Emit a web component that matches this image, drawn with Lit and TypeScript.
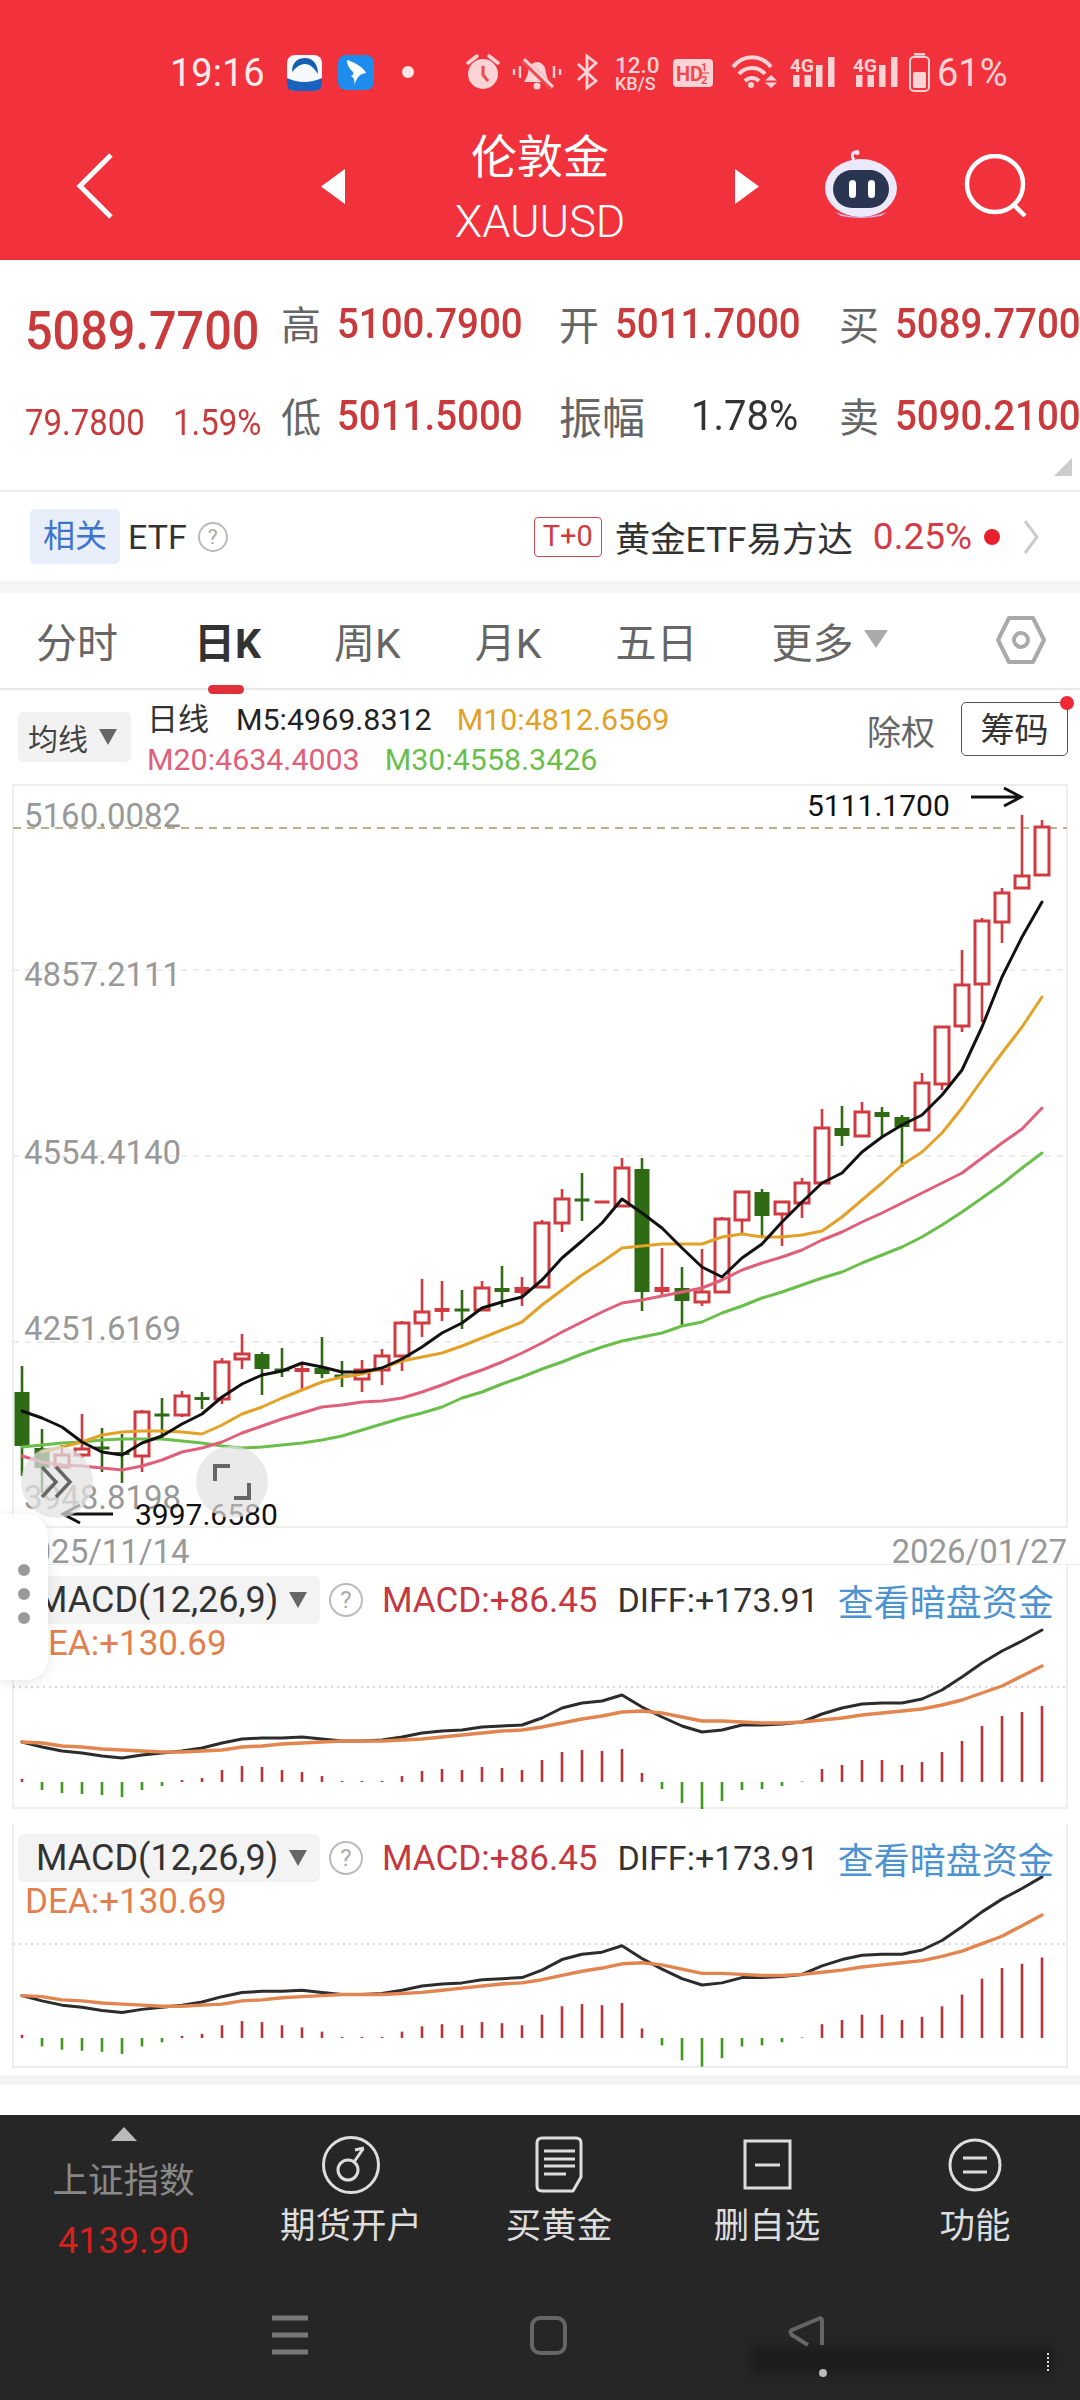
import { LitElement, html, svg, css } from 'lit';
import { customElement } from 'lit/decorators.js';

// candle: kind (r hollow red, R solid red, g solid green), body top, body bottom, wick top, wick bottom
type Candle = [string, number, number, number, number];

const CANDLES: Candle[] = [
  ['g', 1392, 1446, 1366, 1476], ['g', 1448, 1468, 1429, 1493], ['r', 1455, 1467, 1445, 1468], ['r', 1449, 1455, 1414, 1458],
  ['g', 1448, 1448, 1428, 1472], ['g', 1452, 1455, 1434, 1483], ['r', 1412, 1456, 1410, 1472], ['g', 1415, 1415, 1398, 1438],
  ['r', 1396, 1415, 1391, 1417], ['g', 1397, 1400, 1392, 1409], ['r', 1362, 1399, 1358, 1404], ['r', 1354, 1359, 1334, 1369],
  ['g', 1354, 1369, 1352, 1395], ['g', 1370, 1370, 1348, 1377], ['R', 1368, 1372, 1363, 1389], ['g', 1368, 1374, 1337, 1378],
  ['g', 1376, 1376, 1361, 1387], ['r', 1370, 1379, 1360, 1392], ['r', 1356, 1370, 1349, 1385], ['r', 1323, 1356, 1321, 1371],
  ['r', 1312, 1323, 1279, 1337], ['R', 1308, 1312, 1281, 1321], ['g', 1310, 1310, 1290, 1329], ['r', 1288, 1310, 1281, 1311],
  ['g', 1288, 1292, 1266, 1307], ['R', 1287, 1293, 1277, 1306], ['r', 1223, 1287, 1220, 1288], ['r', 1199, 1223, 1189, 1232],
  ['g', 1200, 1200, 1173, 1221], ['R', 1202, 1202, 1202, 1202], ['r', 1168, 1206, 1158, 1206], ['g', 1169, 1292, 1158, 1311],
  ['R', 1287, 1292, 1248, 1297], ['g', 1288, 1301, 1267, 1327], ['r', 1292, 1302, 1249, 1306], ['r', 1219, 1292, 1217, 1292],
  ['r', 1192, 1220, 1192, 1233], ['g', 1192, 1216, 1189, 1237], ['r', 1202, 1214, 1202, 1246], ['r', 1183, 1203, 1178, 1218],
  ['r', 1128, 1183, 1109, 1183], ['g', 1128, 1136, 1106, 1146], ['r', 1112, 1136, 1102, 1136], ['g', 1112, 1117, 1107, 1137],
  ['g', 1117, 1127, 1115, 1167], ['r', 1083, 1130, 1073, 1130], ['r', 1027, 1084, 1027, 1090], ['r', 985, 1026, 950, 1032],
  ['r', 921, 984, 918, 1022], ['r', 893, 922, 888, 943], ['r', 876, 888, 815, 888], ['r', 827, 875, 820, 875],
];

const M5 = [1411, 1418, 1427, 1442, 1452, 1455, 1443, 1436, 1424, 1414, 1397, 1384, 1375, 1371, 1363, 1367, 1372, 1372, 1368, 1359, 1347, 1333, 1323, 1308, 1302, 1297, 1280, 1258, 1241, 1223, 1199, 1213, 1228, 1248, 1267, 1277, 1258, 1244, 1222, 1202, 1183, 1173, 1152, 1137, 1125, 1115, 1095, 1070, 1027, 977, 937, 902];
const M10 = [0, 1452, 1447, 1442, 1435, 1432, 1431, 1431, 1432, 1434, 1425, 1414, 1407, 1398, 1390, 1382, 1377, 1374, 1368, 1361, 1357, 1353, 1346, 1338, 1330, 1322, 1305, 1290, 1275, 1262, 1248, 1246, 1244, 1244, 1244, 1237, 1234, 1237, 1237, 1235, 1231, 1217, 1200, 1183, 1165, 1152, 1133, 1108, 1080, 1053, 1027, 997];
const M20 = [1456, 1462, 1465, 1466, 1468, 1470, 1466, 1460, 1452, 1448, 1442, 1433, 1426, 1419, 1413, 1407, 1405, 1402, 1401, 1398, 1392, 1385, 1377, 1370, 1362, 1353, 1343, 1332, 1322, 1312, 1303, 1300, 1296, 1292, 1288, 1280, 1270, 1263, 1257, 1250, 1240, 1232, 1222, 1213, 1203, 1193, 1183, 1173, 1158, 1143, 1129, 1108];
const M30 = [1447, 1445, 1443, 1442, 1440, 1439, 1439, 1439, 1441, 1443, 1446, 1448, 1447, 1445, 1443, 1440, 1436, 1430, 1424, 1418, 1413, 1407, 1398, 1392, 1384, 1377, 1369, 1362, 1354, 1347, 1341, 1337, 1333, 1326, 1322, 1313, 1306, 1298, 1292, 1285, 1278, 1272, 1263, 1255, 1247, 1237, 1225, 1212, 1198, 1184, 1168, 1153];

// macd bars in px above (+) or below (-) the zero line of the first panel
const BARS = [3, -8, -11, -12, -13, -15, -8, -4, 2, 4, 12, 16, 15, 12, 10, 6, 1, 1, 1, 6, 11, 13, 12, 15, 14, 12, 22, 30, 32, 31, 33, 9, -7, -21, -27, -19, -8, -7, -4, 0.5, 13, 17, 22, 22, 17, 20, 30, 41, 56, 66, 70, 76];
const DIFF = [1742, 1747, 1751, 1753, 1756, 1758, 1755, 1753, 1751, 1748, 1743, 1739, 1738, 1738, 1737, 1739, 1741, 1741, 1740, 1737, 1733, 1731, 1730, 1727, 1726, 1725, 1718, 1708, 1703, 1701, 1695, 1707, 1717, 1726, 1732, 1730, 1725, 1725, 1724, 1722, 1714, 1708, 1704, 1703, 1703, 1699, 1690, 1677, 1663, 1651, 1641, 1630];
const DEA = [1742, 1743, 1746, 1747, 1749, 1750, 1751, 1752, 1752, 1751, 1750, 1747, 1746, 1744, 1743, 1742, 1741, 1741, 1741, 1740, 1739, 1737, 1735, 1733, 1731, 1730, 1727, 1723, 1719, 1716, 1712, 1711, 1713, 1717, 1721, 1721, 1722, 1723, 1723, 1722, 1720, 1718, 1715, 1713, 1711, 1709, 1705, 1700, 1693, 1686, 1676, 1666];

const xAt = (i: number) => 22 + i * 20;

const polyline = (ys: number[], color: string, width: number, map = (y: number) => y) => {
  const pts = ys.map((y, i) => (y ? `${xAt(i)},${map(y)}` : '')).join(' ');
  return svg`<polyline points=${pts} fill="none" stroke=${color} stroke-width=${width} stroke-linejoin="round" stroke-linecap="round" />`;
};

const candle = (c: Candle, i: number) => {
  const [kind, top, bottom, wickTop, wickBottom] = c;
  const x = xAt(i);
  const color = kind === 'g' ? '#2f6a14' : '#cf3b40';
  const wick = wickTop < wickBottom
    ? svg`<line x1=${x} x2=${x} y1=${wickTop} y2=${wickBottom} stroke=${color} stroke-width="2.6" />`
    : '';
  if (top === bottom) {
    return svg`${wick}<rect x=${x - 7.5} y=${top - 1.5} width="15" height="3" fill=${color} />`;
  }
  if (kind === 'r') {
    return svg`${wick}<rect x=${x - 7} y=${top} width="14" height=${bottom - top} fill="#fff" stroke=${color} stroke-width="3" />`;
  }
  return svg`${wick}<rect x=${x - 7.5} y=${top} width="15" height=${bottom - top} fill=${color} />`;
};

@customElement('macd-panel')
export class MacdPanel extends LitElement {
  static properties = {
    top: { type: Number },
    height: { type: Number },
    zero: { type: Number },
    scale: { type: Number },
    grid: { type: Number },
    frameBottom: { type: Number },
  };

  top = 0;
  height = 0;
  zero = 0;
  scale = 1;
  grid = 0;
  frameBottom = 0;

  static styles = css`
    :host {
      display: block;
      position: relative;
      box-sizing: border-box;
      padding-top: 11px;
      font-family: Roboto, "Noto Sans CJK SC", sans-serif;
    }
    .plot {
      position: absolute;
      left: 0;
      top: 0;
    }
    .head {
      position: relative;
      display: flex;
      align-items: center;
      height: 48px;
      padding-left: 18px;
      font-size: 35px;
      white-space: nowrap;
    }
    .select {
      display: flex;
      align-items: center;
      box-sizing: border-box;
      width: 302px;
      height: 48px;
      padding-left: 18px;
      background: #f3f3f3;
      border-radius: 6px;
      color: #333;
      font-size: 36px;
    }
    .select i {
      margin-left: 11px;
      border-left: 9px solid transparent;
      border-right: 9px solid transparent;
      border-top: 16px solid #666;
    }
    .help {
      margin-left: 9px;
      width: 34px;
      height: 34px;
      box-sizing: border-box;
      border: 2px solid #bbb;
      border-radius: 50%;
      color: #aaa;
      font-size: 24px;
      line-height: 30px;
      text-align: center;
    }
    .macd { margin-left: 19px; color: #c4383f; }
    .diff { margin-left: 20px; color: #333; font-size: 34px; }
    .more { margin-left: 19px; color: #4c93d0; font-size: 36px; }
    .dea {
      position: relative;
      padding: 0 0 0 25px;
      height: 40px;
      line-height: 40px;
      font-size: 35px;
      color: #e28050;
    }
  `;

  render() {
    const k = this.scale;
    const map = (y: number) => this.zero + (y - 1782) * k;
    return html`
      <svg class="plot" width="1080" height=${this.height} viewBox="0 ${this.top} 1080 ${this.height}">
        <path d="M13 ${this.top + 1} V${this.frameBottom} H1067 V${this.top + 1}" fill="none" stroke="#eee" stroke-width="2" />
        <line x1="13" x2="1067" y1=${this.grid} y2=${this.grid} stroke="#ccc" stroke-width="1.5" stroke-dasharray="2 4" />
        ${BARS.map((v, i) => svg`<line x1=${xAt(i)} x2=${xAt(i)} y1=${this.zero} y2=${this.zero - v * k}
          stroke=${v > 0 ? '#b9333a' : '#3d9a1e'} stroke-width="2.6" />`)}
        ${polyline(DIFF, '#2c2c2c', 3, map)}
        ${polyline(DEA, '#e2854f', 3.4, map)}
      </svg>
      <div class="head">
        <div class="select">MACD(12,26,9)<i></i></div>
        <div class="help">?</div>
        <div class="macd">MACD:+86.45</div>
        <div class="diff">DIFF:+173.91</div>
        <div class="more">查看暗盘资金</div>
      </div>
      <div class="dea">DEA:+130.69</div>
    `;
  }
}

@customElement('app-root')
export class AppRoot extends LitElement {
  static styles = css`
    :host {
      display: block;
      position: relative;
      width: 1080px;
      height: 2400px;
      overflow: hidden;
      background: #fff;
      font-family: Roboto, "Noto Sans CJK SC", sans-serif;
      color: #333;
    }
    svg { display: block; flex: none; }

    .header {
      height: 260px;
      background: #f1323c;
      color: #fff;
    }
    .status {
      display: flex;
      align-items: center;
      box-sizing: border-box;
      height: 128px;
      padding: 18px 0 0 170px;
    }
    .time { width: 110px; font-size: 38px; font-weight: 400; color: #fdeaea; }
    .pct { margin-left: -3px; font-size: 38px; font-weight: 400; color: #fdd3d5; }
    .nav {
      display: flex;
      align-items: center;
      height: 116px;
      padding-left: 75px;
    }
    .title {
      align-self: flex-start;
      width: 320px;
      height: 132px;
      margin: 0 35px;
      text-align: center;
    }
    .title b { display: block; font-size: 46px; font-weight: 400; line-height: 58px; }
    .title span { display: block; font-size: 45px; line-height: 72px; font-weight: 300; }

    .quote {
      position: relative;
      display: grid;
      grid-template-columns: 282px 278px 280px 240px;
      grid-auto-rows: 92px;
      box-sizing: border-box;
      height: 232px;
      padding-top: 17px;
      border-bottom: 2px solid #eee;
      white-space: nowrap;
    }
    .cell { display: flex; align-items: center; }
    .lab { flex: none; width: 56px; font-size: 40px; color: #666; margin-left: -1px; }
    .lab.wide { width: 132px; font-size: 43px; }
    /* the numerals on this screen are narrower than Roboto */
    .val {
      display: inline-block;
      font-size: 43px;
      color: #c93a3c;
      font-weight: 500;
      transform: scaleX(0.895);
      transform-origin: left center;
    }
    .val.plain { color: #333; font-weight: 400; transform: scaleX(0.93); }
    .first { padding-left: 25px; }
    .big {
      display: inline-block;
      margin-top: 14px;
      font-size: 54px;
      font-weight: 500;
      color: #c93a3c;
      transform: scaleX(0.9);
      transform-origin: left center;
    }
    .chg {
      display: inline-block;
      width: 134px;
      margin-top: 14px;
      font-size: 37px;
      color: #c93a3c;
      transform: scaleX(0.89);
      transform-origin: left center;
    }
    .chg.p { width: auto; margin-left: 14px; }
    .corner {
      position: absolute;
      right: 8px;
      bottom: 14px;
      width: 18px;
      height: 18px;
      background: #ccc;
      clip-path: polygon(100% 0, 100% 100%, 0 100%);
    }

    .etf {
      display: flex;
      align-items: center;
      height: 89px;
      padding-left: 30px;
      white-space: nowrap;
    }
    .tag {
      width: 90px;
      height: 55px;
      background: #e8effa;
      border-radius: 5px;
      color: #3f74cd;
      font-size: 32px;
      line-height: 55px;
      text-align: center;
    }
    .etf-name { margin-left: 8px; font-size: 34px; }
    .qmark {
      margin-left: 11px;
      width: 30px;
      height: 30px;
      box-sizing: border-box;
      border: 2px solid #bbb;
      border-radius: 50%;
      color: #aaa;
      font-size: 21px;
      line-height: 26px;
      text-align: center;
    }
    .t0 {
      margin-left: 306px;
      width: 68px;
      height: 40px;
      box-sizing: border-box;
      border: 1.5px solid #cf4a50;
      border-radius: 4px;
      color: #cf3b40;
      font-size: 29px;
      line-height: 36px;
      text-align: center;
    }
    .fund { margin-left: 13px; font-size: 35.4px; color: #333; }
    .fund-pct { margin-left: 20px; font-size: 37px; color: #d43b45; }
    .dot { margin-left: 12px; width: 16px; height: 16px; border-radius: 50%; background: #e8202e; }

    .gap { height: 12px; background: #f5f5f5; }
    .gap.low { height: 10px; }

    .tabs {
      display: flex;
      align-items: center;
      gap: 74px;
      box-sizing: border-box;
      height: 97px;
      padding: 0 0 2px 36px;
      border-bottom: 2px solid #e8e8e8;
      font-size: 41px;
      color: #666;
      position: relative;
    }
    .tab { position: relative; }
    .tab.on { margin: 0 -1px 0 2px; color: #333; font-weight: 700; }
    .tab.on::after {
      content: '';
      position: absolute;
      left: 14px;
      bottom: -24px;
      width: 36px;
      height: 9px;
      background: #e0313a;
      border-radius: 5px;
    }
    .more-tab { display: flex; align-items: center; gap: 10px; }
    .more-tab i {
      border-left: 12px solid transparent;
      border-right: 12px solid transparent;
      border-top: 18px solid #aaa;
      margin-top: -1px;
    }
    .hex { position: absolute; left: 995px; top: 22px; }

    .legend {
      display: flex;
      align-items: flex-start;
      height: 94px;
      padding-left: 18px;
      white-space: nowrap;
    }
    .ma-select {
      display: flex;
      align-items: center;
      box-sizing: border-box;
      width: 113px;
      height: 50px;
      margin-top: 22px;
      padding-left: 10px;
      background: #f2f2f2;
      border-radius: 5px;
      font-size: 30px;
      color: #444;
    }
    .ma-select i {
      margin-left: 11px;
      border-left: 9px solid transparent;
      border-right: 9px solid transparent;
      border-top: 16px solid #666;
    }
    .ma { margin: 10px 0 0 16px; font-size: 30.4px; line-height: 40px; }
    .ma-row { display: flex; gap: 25px; }
    .ma-day { font-size: 31px; margin-right: 2px; }
    .m5 { color: #222; }
    .m10 { color: #e3a127; }
    .m20 { color: #e0607a; }
    .m30 { color: #6abf4b; }
    .fq { margin: 20px 0 0 auto; font-size: 34px; line-height: 46px; color: #666; }
    .cm {
      position: relative;
      box-sizing: border-box;
      width: 107px;
      height: 54px;
      margin: 12px 12px 0 26px;
      border: 1.5px solid #555;
      border-radius: 5px;
      font-size: 34px;
      line-height: 54px;
      text-align: center;
      color: #333;
    }
    .cm::after {
      content: '';
      position: absolute;
      right: -7px;
      top: -7px;
      width: 14px;
      height: 14px;
      border-radius: 50%;
      background: #ee2a36;
    }

    .chart {
      position: relative;
      box-sizing: border-box;
      height: 781px;
      border-bottom: 1px solid #eee;
    }
    .chart text { font-family: Roboto, sans-serif; }
    .dates {
      display: flex;
      justify-content: space-between;
      box-sizing: border-box;
      height: 36px;
      padding: 0 13px 0 14px;
      font-size: 33px;
      line-height: 48px;
      color: #999;
    }
    .panel-a { height: 258px; }
    .panel-b { height: 252px; }
    .fab {
      position: absolute;
      top: 662px;
      width: 72px;
      height: 72px;
      border-radius: 50%;
      background: rgba(226, 226, 226, 0.72);
      display: flex;
      align-items: center;
      justify-content: center;
    }
    .fab.a { left: 21px; }
    .fab.b { left: 196px; }
    .drawer {
      position: absolute;
      left: 0;
      top: 1514px;
      width: 48px;
      height: 166px;
      background: #fff;
      border-radius: 0 22px 22px 0;
      box-shadow: 0 2px 14px rgba(0, 0, 0, 0.1);
      display: flex;
      flex-direction: column;
      align-items: center;
      gap: 12px;
      padding-top: 50px;
      box-sizing: border-box;
    }
    .drawer i { width: 12px; height: 12px; border-radius: 50%; background: #999; }

    .foot-white { height: 30px; }

    .bottom {
      position: relative;
      height: 285px;
      background: #262626;
    }
    .dock {
      display: grid;
      grid-template-columns: 247px repeat(4, 208px);
      height: 170px;
    }
    .index { text-align: center; padding-top: 12px; }
    .index i {
      display: block;
      width: 0;
      margin: 0 auto;
      border-left: 13px solid transparent;
      border-right: 13px solid transparent;
      border-bottom: 14px solid #bbb;
    }
    .index span { display: block; margin-top: 15px; font-size: 35.5px; line-height: 50px; color: #888; }
    .index b { display: block; margin-top: 10px; font-size: 36px; line-height: 50px; font-weight: 400; color: #d8201f; }
    .dock-item {
      display: flex;
      flex-direction: column;
      align-items: center;
      padding-top: 20px;
      color: #ddd;
      font-size: 35.5px;
    }
    .dock-item span { margin-top: 6px; line-height: 50px; }
    .smudge {
      position: absolute;
      left: 752px;
      top: 232px;
      width: 300px;
      height: 26px;
      background: #1b1b1b;
      filter: blur(5px);
    }
    .sys { position: absolute; left: 0; top: 190px; }
  `;

  renderStatus() {
    const pale = '#fdd3d5';
    const red = '#ee4a50';
    const signal = (x: number) => svg`
      <text x=${x} y="72" font-size="19" font-weight="700" fill=${pale} font-family="Roboto, sans-serif">4G</text>
      <rect x=${x + 3} y="75" width="6.5" height="12" fill=${pale} />
      <rect x=${x + 14.5} y="75" width="6.5" height="12" fill=${pale} />
      <rect x=${x + 26} y="65" width="6.5" height="22" fill=${pale} />
      <rect x=${x + 38} y="57" width="6.5" height="30" fill=${pale} />`;
    return html`
      <svg width="660" height="60" viewBox="280 44 660 60" style="margin-top:2px">
        <rect x="287" y="55" width="35" height="36" rx="8" fill="#f7f9fc" />
        <path d="M292 72 C292 62 298 58 305 58 C313 58 318 64 318 74 C314 68 310 64 305 64 C299 64 296 68 292 72Z" fill="#155fb3" />
        <path d="M287 78 Q304 86 322 78 V84 Q322 91 314 91 H295 Q287 91 287 84Z" fill="#1a62c0" />
        <rect x="338" y="55" width="36" height="35" rx="8" fill="#1e8cec" />
        <path d="M347 60 C355 62 364 68 366 73 C360 74 358 76 354 85 C355 80 354 78 351 76 C354 75 354 73 352 71 C349 68 347 65 347 60Z" fill="#fff" />
        <circle cx="408" cy="72" r="6" fill="#fde6e6" />

        <circle cx="483" cy="74" r="15" fill=${pale} />
        <path d="M483 66 V75 L488 81" stroke=${red} stroke-width="3" fill="none" />
        <path d="M468 63 L477 56 M498 63 L489 56" stroke=${pale} stroke-width="3.5" stroke-linecap="round" />

        <path d="M524 82 C528 76 528 72 529 68 C532 60 542 60 545 68 C546 72 546 77 550 82Z" fill=${pale} />
        <circle cx="537" cy="86" r="3.5" fill=${pale} />
        <path d="M523 60 L552 88" stroke=${red} stroke-width="6" />
        <path d="M524 59 L553 87" stroke=${pale} stroke-width="3" />
        <path d="M514 69 V75 M520 66 V78 M554 66 V78 M560 69 V75" stroke=${pale} stroke-width="2.4" />

        <path d="M578 64 L596 81 L587 88 V56 L596 63 L578 80" fill="none" stroke=${pale} stroke-width="2.8" />

        <text x="615" y="73" font-size="22.5" font-weight="500" fill=${pale} font-family="Roboto, sans-serif">12.0</text>
        <text x="615" y="90" font-size="18" font-weight="500" fill=${pale} font-family="Roboto, sans-serif">KB/S</text>

        <rect x="673" y="59" width="40" height="28" rx="4" fill=${pale} />
        <text x="676" y="81" font-size="20" font-weight="700" fill=${red} font-family="Roboto, sans-serif">HD</text>
        <text x="701" y="71" font-size="11" font-weight="700" fill=${red} font-family="Roboto, sans-serif">1</text>
        <text x="701" y="84" font-size="11" font-weight="700" fill=${red} font-family="Roboto, sans-serif">2</text>
        <path d="M700 73 H709" stroke=${red} stroke-width="1.2" />

        <path d="M733 67 C743 54 761 54 771 67 M739 74 C746 66 758 66 765 74 M745 81 C749 77 755 77 759 81" fill="none" stroke=${pale} stroke-width="4" />
        <circle cx="751" cy="85" r="3" fill=${pale} />
        <path d="M771 75 L777 80.5 H765Z M771 88 L777 82.5 H765Z" fill=${pale} />

        ${signal(790)}
        ${signal(853)}

        <rect x="910" y="57" width="19" height="34" rx="4" fill="none" stroke=${pale} stroke-width="2" />
        <rect x="913" y="72" width="13" height="16" rx="1.5" fill=${pale} />
        <rect x="914" y="53" width="11" height="2.5" fill=${pale} />
      </svg>
    `;
  }

  renderChart() {
    const grid = [970, 1156, 1342];
    const axis: [string, number][] = [['5160.0082', 827], ['4857.2111', 986], ['4554.4140', 1164], ['4251.6169', 1340], ['3948.8198', 1509]];
    return html`
      <svg width="1080" height="744" viewBox="0 784 1080 744">
        <rect x="13" y="785" width="1054" height="742" fill="none" stroke="#eee" stroke-width="2" />
        ${grid.map((y) => svg`<line x1="13" x2="1067" y1=${y} y2=${y} stroke="#e8e8e8" stroke-width="1.5" stroke-dasharray="6 6" />`)}
        <line x1="13" x2="1067" y1="828" y2="828" stroke="#b9b08c" stroke-width="2" stroke-dasharray="8 6" />
        ${CANDLES.map(candle)}
        ${polyline(M30, '#6abf4b', 3)}
        ${polyline(M20, '#e0607a', 3)}
        ${polyline(M10, '#e3a127', 3)}
        ${polyline(M5, '#111', 3)}
        ${axis.map(([t, y]) => svg`<text x="24" y=${y} font-size="33" fill="#999">${t}</text>`)}
        <text x="807" y="816" font-size="30" fill="#111">5111.1700</text>
        <path d="M971 797 H1021 M1004 788 L1021 797 L1004 806" fill="none" stroke="#111" stroke-width="3" />
        <text x="135" y="1525" font-size="30" fill="#111">3997.6580</text>
        <path d="M113 1514 H63 M80 1505 L63 1514 L80 1523" fill="none" stroke="#111" stroke-width="3" />
      </svg>
      <div class="dates"><span>2025/11/14</span><span>2026/01/27</span></div>
      <div class="fab a">
        <svg width="36" height="36" viewBox="0 0 36 36"><path d="M3 3 L17 18 L3 33 M17 3 L31 18 L17 33" fill="none" stroke="#666" stroke-width="3.5" /></svg>
      </div>
      <div class="fab b">
        <svg width="38" height="38" viewBox="0 0 38 38"><path d="M2 18 V3 H17 M36 20 V35 H21" fill="none" stroke="#666" stroke-width="4" /></svg>
      </div>
    `;
  }

  render() {
    return html`
      <div class="header">
        <div class="status">
          <div class="time">19:16</div>
          ${this.renderStatus()}
          <div class="pct">61%</div>
        </div>
        <div class="nav">
          <svg width="40" height="66" viewBox="0 0 40 66"><path d="M36 2 L5 33 L36 64" fill="none" stroke="#fff" stroke-width="5" /></svg>
          <svg width="24" height="35" viewBox="0 0 24 35" style="margin-left:206px"><path d="M24 0 V35 L0 17.5Z" fill="#fff" /></svg>
          <div class="title"><b>伦敦金</b><span>XAUUSD</span></div>
          <svg width="24" height="35" viewBox="0 0 24 35"><path d="M0 0 V35 L24 17.5Z" fill="#fff" /></svg>
          <svg width="72" height="68" viewBox="0 0 72 68" style="margin-left:66px;margin-top:-4px">
            <path d="M29 10 C26 6 27 2 31 2" fill="none" stroke="#e9e4f6" stroke-width="3" />
            <circle cx="32" cy="2.5" r="2.5" fill="#e9e4f6" />
            <ellipse cx="36" cy="38" rx="36" ry="29" fill="#ece9fa" />
            <path d="M10 62 Q36 72 62 62 L56 66 Q36 70 16 66Z" fill="#c9bdf0" />
            <rect x="8" y="20" width="56" height="38" rx="19" fill="#2a3552" />
            <rect x="24" y="30" width="7" height="18" rx="3.5" fill="#fff" />
            <rect x="43" y="30" width="7" height="18" rx="3.5" fill="#fff" />
          </svg>
          <svg width="64" height="64" viewBox="0 0 64 64" style="margin-left:66px">
            <circle cx="32" cy="30" r="28" fill="none" stroke="#fff" stroke-width="4.5" />
            <path d="M50 50 L62 62" stroke="#fff" stroke-width="4.5" />
          </svg>
        </div>
      </div>

      <div class="quote">
        <div class="cell first"><span class="big">5089.7700</span></div>
        <div class="cell"><span class="lab">高</span><span class="val">5100.7900</span></div>
        <div class="cell"><span class="lab">开</span><span class="val">5011.7000</span></div>
        <div class="cell"><span class="lab">买</span><span class="val">5089.7700</span></div>
        <div class="cell first"><span class="chg">79.7800</span><span class="chg p">1.59%</span></div>
        <div class="cell"><span class="lab">低</span><span class="val">5011.5000</span></div>
        <div class="cell"><span class="lab wide">振幅</span><span class="val plain">1.78%</span></div>
        <div class="cell"><span class="lab">卖</span><span class="val">5090.2100</span></div>
        <div class="corner"></div>
      </div>

      <div class="etf">
        <div class="tag">相关</div>
        <div class="etf-name">ETF</div>
        <div class="qmark">?</div>
        <div class="t0">T+0</div>
        <div class="fund">黄金ETF易方达</div>
        <div class="fund-pct">0.25%</div>
        <div class="dot"></div>
        <svg width="16" height="34" viewBox="0 0 16 34" style="margin-left:23px"><path d="M2 1 L14 17 L2 33" fill="none" stroke="#ccc" stroke-width="3" /></svg>
      </div>
      <div class="gap"></div>

      <div class="tabs">
        <div class="tab">分时</div>
        <div class="tab on">日K</div>
        <div class="tab">周K</div>
        <div class="tab">月K</div>
        <div class="tab">五日</div>
        <div class="tab more-tab">更多<i></i></div>
        <svg class="hex" width="52" height="50" viewBox="0 0 52 50">
          <path d="M14 3 H38 L49 25 L38 47 H14 L3 25Z" fill="none" stroke="#aaa" stroke-width="4" stroke-linejoin="round" />
          <circle cx="26" cy="25" r="7" fill="none" stroke="#aaa" stroke-width="4" />
        </svg>
      </div>

      <div class="legend">
        <div class="ma-select">均线<i></i></div>
        <div class="ma">
          <div class="ma-row"><span class="ma-day">日线</span><span class="m5">M5:4969.8312</span><span class="m10">M10:4812.6569</span></div>
          <div class="ma-row"><span class="m20">M20:4634.4003</span><span class="m30">M30:4558.3426</span></div>
        </div>
        <div class="fq">除权</div>
        <div class="cm">筹码</div>
      </div>

      <div class="chart">${this.renderChart()}</div>
      <macd-panel class="panel-a" top="1565" height="258" zero="1782" scale="1" grid="1687" frameBottom="1808"></macd-panel>
      <macd-panel class="panel-b" top="1823" height="252" zero="2038" scale="1.06" grid="1944" frameBottom="2067"></macd-panel>
      <div class="gap low"></div>
      <div class="foot-white"></div>

      <div class="bottom">
        <div class="dock">
          <div class="index"><i></i><span>上证指数</span><b>4139.90</b></div>
          <div class="dock-item">
            <svg width="60" height="60" viewBox="0 0 60 60">
              <circle cx="30" cy="30" r="27.5" fill="none" stroke="#ddd" stroke-width="3" />
              <circle cx="27" cy="35" r="10" fill="none" stroke="#ddd" stroke-width="3" />
              <path d="M33 27 L42 14 M34 15 L43 13" fill="none" stroke="#ddd" stroke-width="3" />
            </svg>
            <span>期货开户</span>
          </div>
          <div class="dock-item">
            <svg width="60" height="60" viewBox="0 0 60 60">
              <path d="M13 3 H47 Q52 3 52 8 V42 L44 56 H13 Q8 56 8 51 V8 Q8 3 13 3Z" fill="none" stroke="#ddd" stroke-width="3" stroke-linejoin="round" />
              <path d="M15 16 H46 M15 24 H46 M15 31 H46 M15 39 H37" stroke="#ddd" stroke-width="3" />
            </svg>
            <span>买黄金</span>
          </div>
          <div class="dock-item">
            <svg width="60" height="60" viewBox="0 0 60 60">
              <rect x="8" y="6" width="45" height="47" fill="none" stroke="#ddd" stroke-width="3" />
              <path d="M18 30 H43" stroke="#ddd" stroke-width="3" />
            </svg>
            <span>删自选</span>
          </div>
          <div class="dock-item">
            <svg width="60" height="60" viewBox="0 0 60 60">
              <circle cx="30" cy="30" r="25" fill="none" stroke="#ddd" stroke-width="3" />
              <path d="M18 23 H42 M18 37 H42" stroke="#ddd" stroke-width="3" />
            </svg>
            <span>功能</span>
          </div>
        </div>
        <div class="smudge"></div>
        <svg class="sys" width="1080" height="80" viewBox="0 0 1080 80">
          <path d="M272 13 H308 M272 30 H308 M272 47 H308" stroke="#777" stroke-width="5" />
          <rect x="532" y="13" width="33" height="35" rx="8" fill="none" stroke="#666" stroke-width="4" />
          <path d="M808 40 L792 30 Q789 27 792 25 L818 14 Q822 12 822 16 V40" fill="none" stroke="#666" stroke-width="4" stroke-linejoin="round" />
          <circle cx="823" cy="68" r="4" fill="#bbb" />
          <path d="M1048 48 V68" stroke="#ddd" stroke-width="2" stroke-dasharray="2 2" />
        </svg>
      </div>

      <div class="drawer"><i></i><i></i><i></i></div>
    `;
  }
}
